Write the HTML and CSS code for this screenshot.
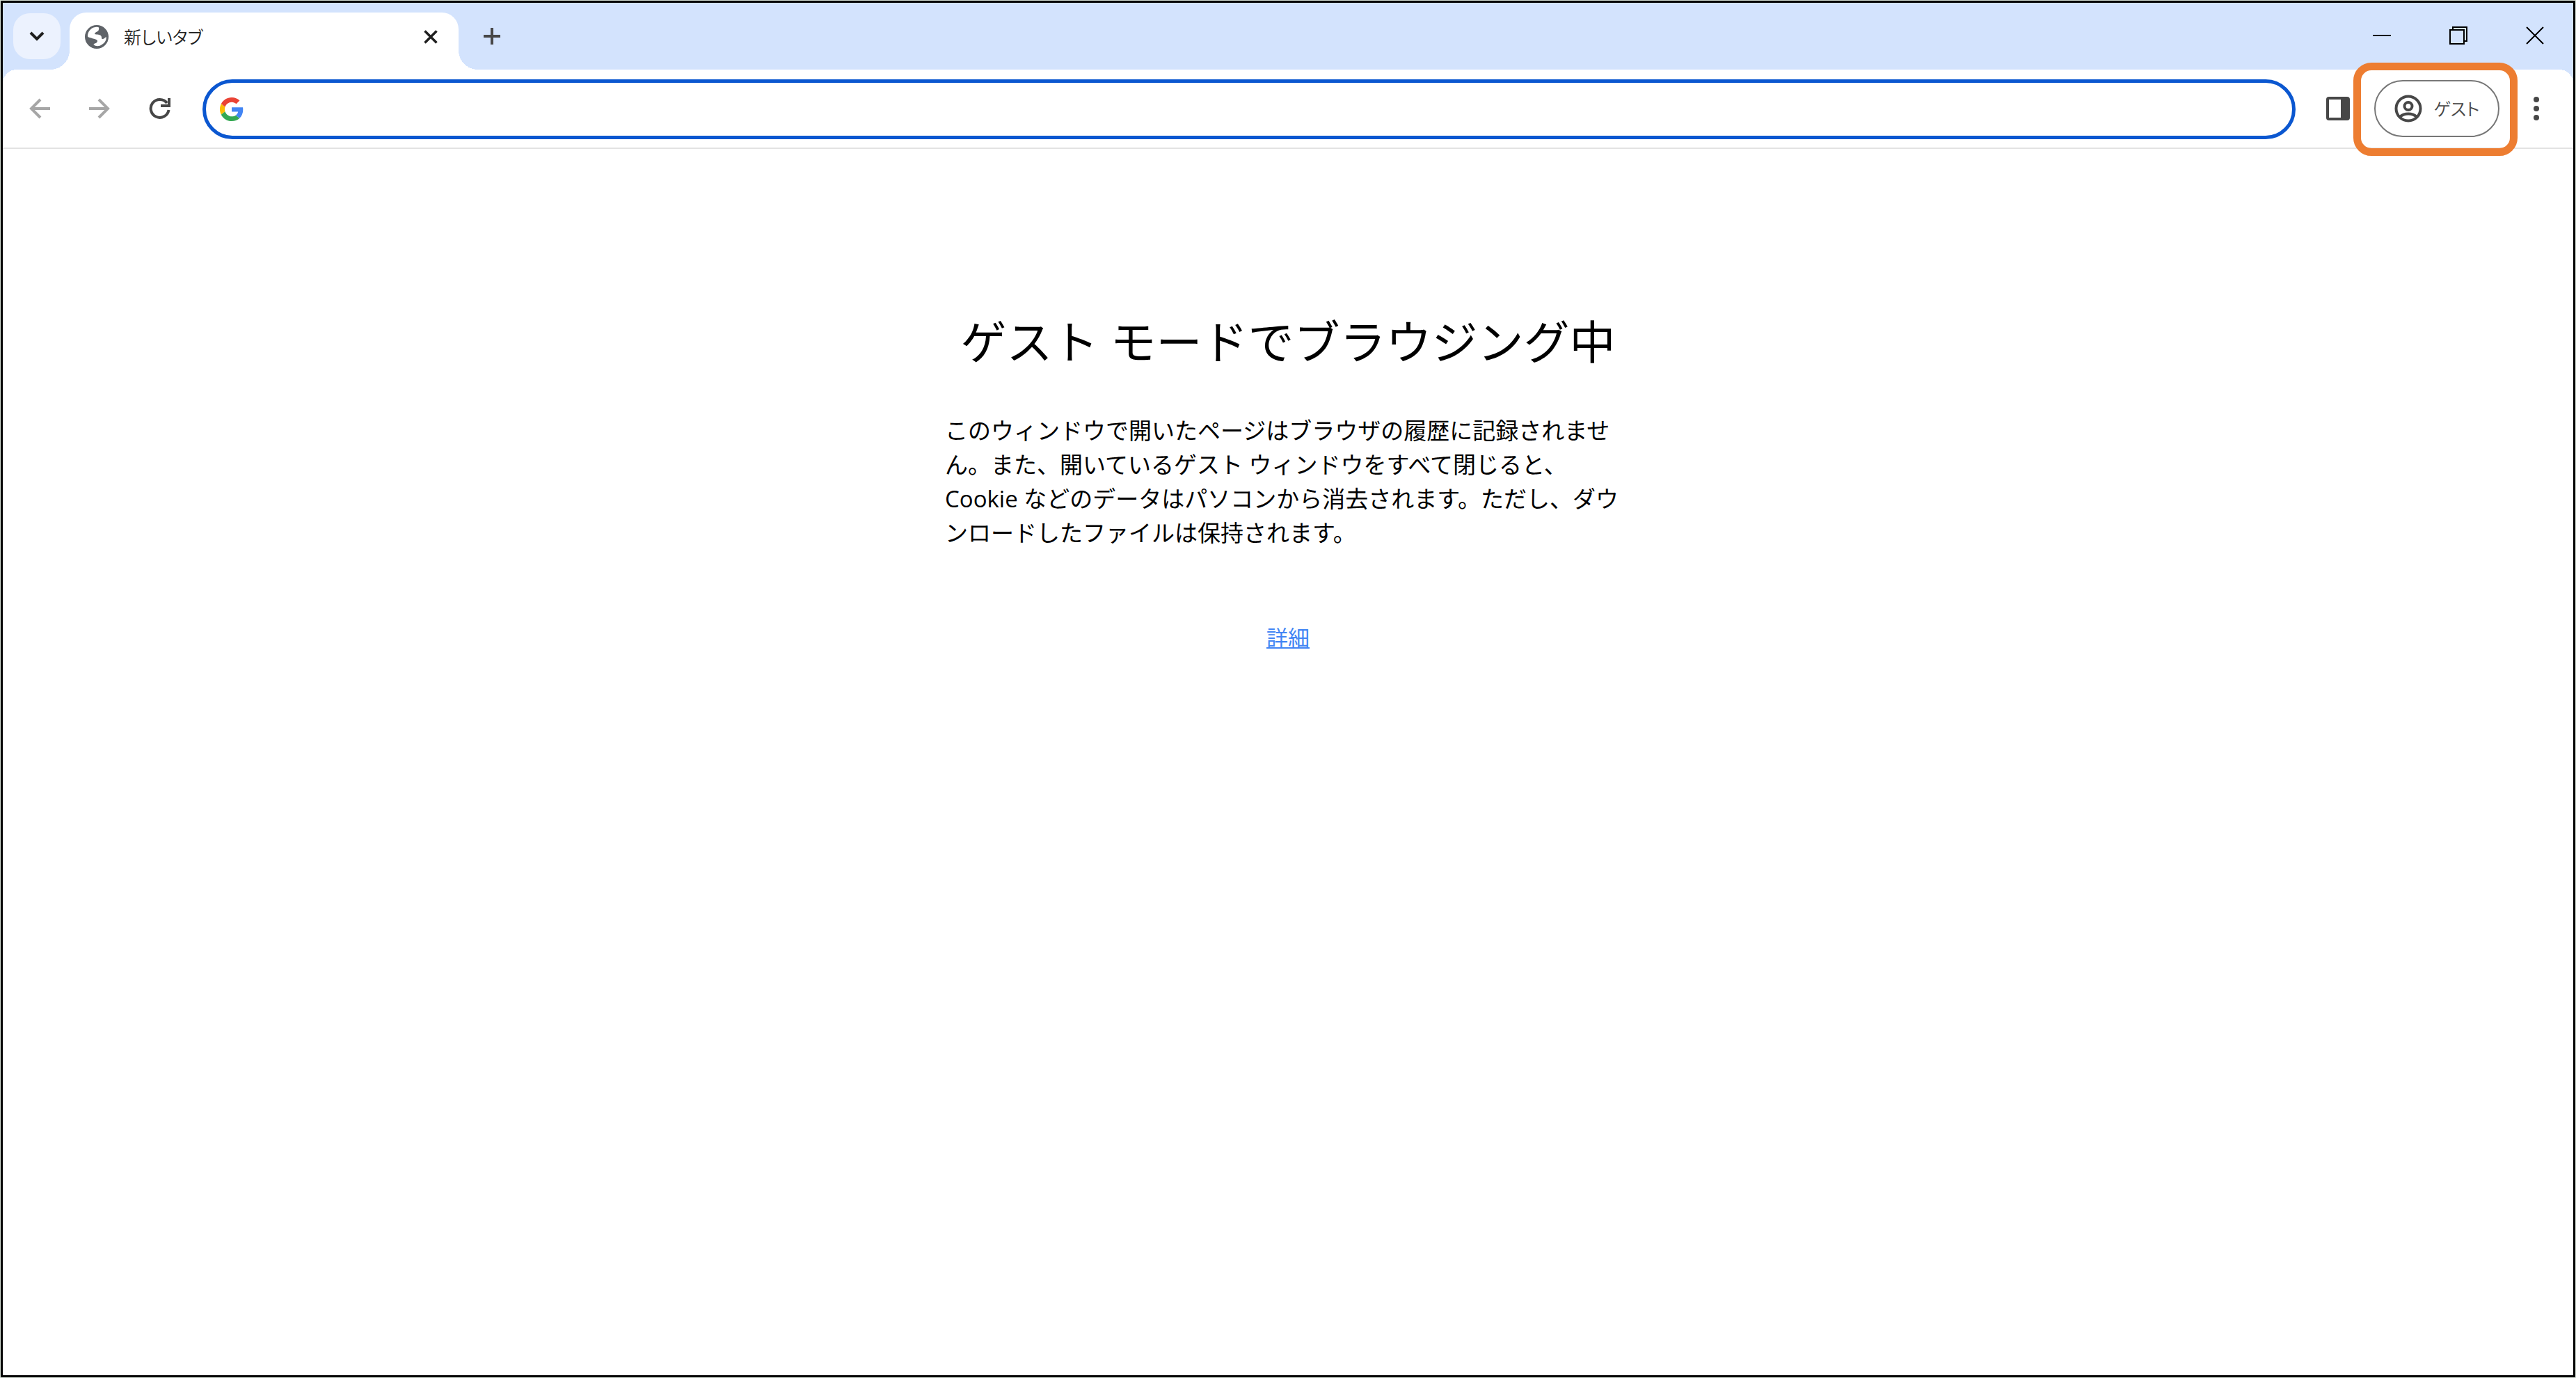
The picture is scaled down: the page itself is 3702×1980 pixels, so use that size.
FILE: index.html
```html
<!DOCTYPE html>
<html lang="ja">
<head>
<meta charset="utf-8">
<title>新しいタブ</title>
<link rel="stylesheet" href="styles.css">
</head>
<body>
<div class="window">
  <header class="tab-strip">
    <button class="tab-search" aria-label="タブを検索"><svg width="22" height="16" viewBox="0 0 22 16"><path d="M2 3l9 9 9-9" fill="none" stroke="#1f1f1f" stroke-width="4"/></svg></button>
    <div class="tab">
      <svg class="favicon" width="36" height="36" viewBox="0 0 36 36"><circle cx="18" cy="18" r="17" fill="#5f6368"/><path d="M5 17C5 11 9 5 16 4c4-1 6 0 5 3 0 4-5 3-6 7 3 1 8 0 9.500 3 1 2 0 4 2 4s3-2 5-3c1 4-2 9-6 11-4 3-9 3-12 0 0-2 5-1 5.500-5 0-3-6-3-9-4.500C7 19 5 18 5 17z" fill="#fff"/></svg>
      <span class="tab-title">新しいタブ</span>
      <button class="tab-close" aria-label="閉じる"><svg width="20" height="20" viewBox="0 0 20 20"><path d="M1.500 1.500l17 17m0-17l-17 17" stroke="#1f1f1f" stroke-width="3.500"/></svg></button>
    </div>
    <button class="new-tab" aria-label="新しいタブを開く"><svg width="26" height="26" viewBox="0 0 26 26"><path d="M13 1v24M1 13h24" stroke="#474747" stroke-width="4"/></svg></button>
    <div class="caption-buttons">
      <button aria-label="最小化"><svg width="26" height="26" viewBox="0 0 26 26"><path d="M0 13h26" stroke="#000" stroke-width="2"/></svg></button>
      <button aria-label="元に戻す"><svg width="26" height="26" viewBox="0 0 26 26"><path d="M1 5h20v20H1zM5 5V1h20v20h-4" fill="none" stroke="#000" stroke-width="2"/></svg></button>
      <button aria-label="ウィンドウを閉じる"><svg width="26" height="26" viewBox="0 0 26 26"><path d="M1 1l24 24m0-24L1 25" stroke="#000" stroke-width="2"/></svg></button>
    </div>
  </header>
  <nav class="toolbar">
    <button class="tool" aria-label="戻る"><svg width="30" height="30" viewBox="0 0 30 30"><path d="M30 15H3M16 2L3 15l13 13" fill="none" stroke="#a6a6a6" stroke-width="4"/></svg></button>
    <button class="tool" aria-label="進む"><svg width="30" height="30" viewBox="0 0 30 30"><path d="M0 15h27M14 2l13 13-13 13" fill="none" stroke="#a6a6a6" stroke-width="4"/></svg></button>
    <button class="tool" aria-label="再読み込み"><svg width="32" height="32" viewBox="0 0 32 32"><path d="M29.500 18A13 13 0 1 1 27 8" fill="none" stroke="#474747" stroke-width="4"/><path d="M32 1v13H18v-4h10V1z" fill="#474747"/></svg></button>
    <label class="omnibox">
      <svg width="34" height="34" viewBox="0 0 48 48"><path fill="#EA4335" d="M24 9.500c3.540 0 6.710 1.220 9.210 3.600l6.850-6.850C35.900 2.380 30.470 0 24 0 14.620 0 6.510 5.380 2.560 13.220l7.980 6.190C12.430 13.720 17.740 9.500 24 9.500z"/><path fill="#4285F4" d="M46.980 24.550c0-1.570-.15-3.090-.38-4.550H24v9.020h12.940c-.58 2.960-2.260 5.480-4.780 7.180l7.730 6c4.510-4.180 7.090-10.360 7.090-17.650z"/><path fill="#FBBC05" d="M10.530 28.590c-.48-1.450-.76-2.990-.76-4.590s.27-3.140.76-4.590l-7.980-6.190C.92 16.460 0 20.120 0 24c0 3.880.92 7.540 2.560 10.780l7.970-6.190z"/><path fill="#34A853" d="M24 48c6.480 0 11.930-2.130 15.890-5.810l-7.730-6c-2.150 1.450-4.920 2.300-8.160 2.300-6.260 0-11.570-4.220-13.470-9.910l-7.980 6.190C6.510 42.620 14.620 48 24 48z"/></svg>
      <input type="text" aria-label="アドレス検索バー">
    </label>
    <button class="tool side-panel" aria-label="サイドパネル"><svg width="34" height="34" viewBox="0 0 34 34"><rect width="34" height="34" rx="4" fill="#474747"/><path d="M4 4h17v26H4z" fill="#fff"/></svg></button>
    <div class="profile">
      <button class="profile-chip"><svg width="40" height="40" viewBox="0 0 40 40"><g fill="none" stroke="#474747" stroke-width="4"><circle cx="20" cy="20" r="17.500"/><circle cx="20" cy="16.500" r="5.500"/><path d="M8 32c6-6 18-6 24 0"/></g></svg><span>ゲスト</span></button>
    </div>
    <button class="tool menu" aria-label="メニュー"><svg width="10" height="36" viewBox="0 0 10 36"><g fill="#474747"><circle cx="5" cy="5" r="4"/><circle cx="5" cy="18" r="4"/><circle cx="5" cy="31" r="4"/></g></svg></button>
  </nav>
  <main class="page">
    <h1>ゲスト モードでブラウジング中</h1>
    <p>このウィンドウで開いたページはブラウザの履歴に記録されません。また、開いているゲスト ウィンドウをすべて閉じると、Cookie などのデータはパソコンから消去されます。ただし、ダウンロードしたファイルは保持されます。</p>
    <a href="#details">詳細</a>
  </main>
</div>
</body>
</html>
```
FILE: styles.css
```css
* { box-sizing: border-box; }

body {
  margin: 0;
  padding: 1px;
  background: #d3dcd3;
  color: #000;
  font-family: "Open Sans", "Noto Sans CJK JP", sans-serif;
}

.window {
  min-height: calc(100vh - 2px);
  border: 3px solid #000;
  background: #fff;
}

button {
  display: flex;
  align-items: center;
  justify-content: center;
  margin: 0;
  padding: 0;
  border: 0;
  background: none;
  font: inherit;
}

svg { display: block; flex: none; }

/* Tab strip */
.tab-strip {
  display: flex;
  height: 96px;
  padding-left: 15px;
  background: #d3e3fd;
}

.tab-search {
  width: 68px;
  height: 66px;
  margin-top: 15px;
  border-radius: 24px;
  background: #ecf2fe;
}

.tab {
  position: relative;
  display: flex;
  align-items: center;
  width: 559px;
  margin: 14px 0 0 13px;
  padding: 0 26px 12px 21px;
  border-radius: 24px 24px 0 0;
  background: #fff;
}

.tab::before,
.tab::after {
  content: "";
  position: absolute;
  bottom: 0;
  width: 28px;
  height: 28px;
}

.tab::before {
  right: 100%;
  background: radial-gradient(circle at 0 0, transparent 28px, #fff 28px);
}

.tab::after {
  left: 100%;
  background: radial-gradient(circle at 100% 0, transparent 28px, #fff 28px);
}

.tab-title {
  flex: 1;
  margin-left: 21px;
  color: #1f1f1f;
  font-size: 25px;
  line-height: 32px;
  font-weight: 350;
  font-feature-settings: "palt";
}

.tab-close { width: 28px; height: 28px; }

.new-tab {
  width: 60px;
  height: 66px;
  margin: 15px 0 0 18px;
}

.caption-buttons {
  display: flex;
  height: 94px;
  margin-left: auto;
}

.caption-buttons button { width: 110px; }

/* Toolbar */
.toolbar {
  position: relative;
  display: flex;
  align-items: flex-start;
  padding: 14px 10px 12px;
  border-bottom: 2px solid #e3e3e3;
  background:
    radial-gradient(circle at 20px 20px, transparent 20px, #d3e3fd 20px) 0 0 / 20px 20px no-repeat,
    radial-gradient(circle at 0 20px, transparent 20px, #d3e3fd 20px) 100% 0 / 20px 20px no-repeat,
    #fff;
}

.tool { width: 86px; height: 84px; }

.omnibox {
  display: flex;
  flex: 1;
  align-items: center;
  gap: 16px;
  height: 86px;
  margin-left: 19px;
  padding: 0 20px;
  border: 5px solid #0b57d0;
  border-radius: 43px;
}

.omnibox input {
  flex: 1;
  min-width: 0;
  border: 0;
  outline: 0;
  background: none;
  font: inherit;
  font-size: 25px;
}

.side-panel { margin-left: 18px; }

.profile {
  position: relative;
  display: flex;
  align-items: center;
  height: 84px;
  margin-left: 9px;
}

/* Callout frame round the profile chip */
.profile::after {
  content: "";
  position: absolute;
  inset: -24px -26px -26px -30px;
  border: 11px solid #ed7d31;
  border-radius: 26px;
  pointer-events: none;
}

.profile-chip {
  gap: 17px;
  width: 180px;
  height: 82px;
  border: 2px solid #777;
  border-radius: 41px;
  color: #474747;
  font-size: 25px;
  line-height: 32px;
  font-weight: 350;
  font-feature-settings: "palt";
}

.menu { margin-left: 10px; }

/* Guest page */
.page {
  display: flex;
  flex-direction: column;
  align-items: center;
  padding: 228px 32px 64px;
}

.page h1 {
  margin: 0;
  font-size: 66px;
  line-height: 96px;
  font-weight: 400;
}

.page p {
  max-width: 986px;
  margin: 56px 0 0;
  font-size: 33px;
  line-height: 49px;
  font-weight: 400;
}

.page a {
  margin-top: 102px;
  color: #4285f4;
  font-size: 31px;
  line-height: 48px;
  font-weight: 400;
  text-decoration-thickness: 2px;
  text-underline-offset: 2px;
}
```
